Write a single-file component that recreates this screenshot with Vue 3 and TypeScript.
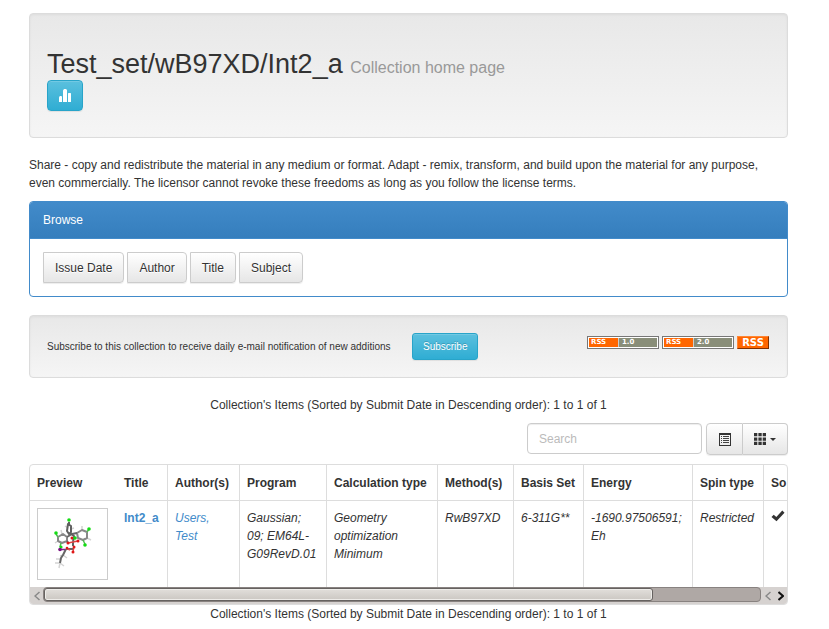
<script setup lang="ts">
import { ref } from 'vue'

interface Column {
  label: string
  width: number
}

const browseOptions: string[] = ['Issue Date', 'Author', 'Title', 'Subject']
const summary = "Collection's Items (Sorted by Submit Date in Descending order): 1 to 1 of 1"
const columns: Column[] = [
  { label: 'Preview', width: 87 },
  { label: 'Title', width: 50 },
  { label: 'Author(s)', width: 72 },
  { label: 'Program', width: 87 },
  { label: 'Calculation type', width: 111 },
  { label: 'Method(s)', width: 76 },
  { label: 'Basis Set', width: 70 },
  { label: 'Energy', width: 109 },
  { label: 'Spin type', width: 71 },
  { label: 'So', width: 144 },
]

const query = ref('')
const viewport = ref<HTMLElement | null>(null)

function scrollTable(delta: number): void {
  viewport.value?.scrollBy({ left: delta })
}
</script>

<template>
  <main class="page">
    <header class="well masthead">
      <h1>Test_set/wB97XD/Int2_a <small>Collection home page</small></h1>
      <button class="btn btn-info stats" type="button" aria-label="Statistics">
        <svg width="12" height="13" viewBox="0 0 12 13" fill="#fff" aria-hidden="true">
          <path d="M0 8.5.8 7h1.6l.6.8V13H0zM4 1.5 5 0h2l1 1v12H4zM9 4.5l.5-.5h2l.5.5V13H9z" />
        </svg>
      </button>
    </header>

    <p class="license">
      Share - copy and redistribute the material in any medium or format. Adapt - remix, transform,
      and build upon the material for any purpose, even commercially. The licensor cannot revoke
      these freedoms as long as you follow the license terms.
    </p>

    <section class="panel">
      <h2 class="panel-heading">Browse</h2>
      <div class="panel-body">
        <button v-for="option in browseOptions" :key="option" class="btn btn-default browse" type="button">
          {{ option }}
        </button>
      </div>
    </section>

    <form class="well subscribe" @submit.prevent>
      <span class="notice">Subscribe to this collection to receive daily e-mail notification of new additions</span>
      <button class="btn btn-info btn-small" type="submit">Subscribe</button>
      <div class="feeds">
        <a class="feed" href="#rss1"><span class="feed-kind">RSS</span><span class="feed-version">1.0</span></a>
        <a class="feed" href="#rss2"><span class="feed-kind">RSS</span><span class="feed-version">2.0</span></a>
        <a class="feed-solid" href="#rss">RSS</a>
      </div>
    </form>

    <p class="summary">{{ summary }}</p>

    <div class="toolbar">
      <input v-model="query" class="search" type="text" placeholder="Search" aria-label="Search" />
      <div class="group">
        <button class="btn btn-default" type="button" aria-label="Toggle view">
          <svg width="12" height="13" viewBox="0 0 12 13" aria-hidden="true">
            <path d="M0 0h12v13H0zM1 2v10h10V2z" fill="#333" fill-rule="evenodd" />
            <path d="M2 3.5h1M4 3.5h6M2 5.5h1M4 5.5h6M2 7.5h1M4 7.5h6M2 9.5h1M4 9.5h6" stroke="#444" />
          </svg>
        </button>
        <button class="btn btn-default" type="button" aria-label="Columns">
          <svg width="12" height="12" viewBox="0 0 12 12" fill="#333" aria-hidden="true">
            <path d="M0 0h3.3v3.3H0zM4.4 0h3.3v3.3H4.4zM8.7 0H12v3.3H8.7zM0 4.4h3.3v3.3H0zM4.4 4.4h3.3v3.3H4.4zM8.7 4.4H12v3.3H8.7zM0 8.7h3.3V12H0zM4.4 8.7h3.3V12H4.4zM8.7 8.7H12V12H8.7z" />
          </svg>
          <svg width="6" height="3" viewBox="0 0 6 3" fill="#333" aria-hidden="true"><path d="M0 0h6L3 3z" /></svg>
        </button>
      </div>
    </div>

    <div class="results">
      <div ref="viewport" class="viewport">
        <table>
          <colgroup>
            <col v-for="column in columns" :key="column.label" :style="{ width: column.width + 'px' }" />
          </colgroup>
          <thead>
            <tr>
              <th v-for="column in columns" :key="column.label" scope="col">{{ column.label }}</th>
            </tr>
          </thead>
          <tbody>
            <tr>
              <td>
                <a class="thumb" href="#item" aria-label="Int2_a">
                  <svg width="69" height="70" viewBox="0 0 69 70" fill="none" aria-hidden="true">
                    <g stroke="#d4d4d4" stroke-width="1.5">
                      <path d="m27 17 3 2M36 19l-3 1M44 21v-4M49 29l4 2M24 25l-1-4M17 34l3-2M25 46l-3 1M25 46l4 3M22 50l-4 0M22 54l-5 0M22 54l4 3M22 54l-1 5" />
                    </g>
                    <g stroke="#888" stroke-width="2" stroke-linejoin="round">
                      <path d="m20 28 5-3 4 3v4l-5 2-4-2zM39 24l5-3 5 2v6l-4 2-5-2z" />
                      <path d="m29 28 5-3 5-1M29 32l1 2M28 40l7 0M28 40l-3 6-2 3-1 5" stroke="#666" />
                      <path d="m30 15 3 2 0 6-2 2-2-3zM31 13v3M32 24l4 3-1 6M35 33v4" stroke="#606060" />
                    </g>
                    <path d="m23 34-1 4M49 23l2-3M45 31l2 4M20 28l-2-3" stroke="#55b955" stroke-width="1.5" />
                    <g stroke="#df4444" stroke-width="1.5">
                      <path d="m30 34 5-1 5-1M36 37l-1 6M28 39l4 2" />
                    </g>
                    <g fill="#df1717">
                      <circle cx="30" cy="34" r="1.5" /><circle cx="40" cy="32" r="1.5" />
                      <circle cx="36" cy="38" r="1.5" /><circle cx="35" cy="43" r="1.5" />
                      <circle cx="34" cy="29" r="1.5" /><circle cx="29" cy="39" r="1.3" />
                    </g>
                    <g fill="#14dc14">
                      <circle cx="31" cy="11" r="1.8" /><circle cx="18" cy="24" r="1.8" />
                      <circle cx="51" cy="20" r="1.8" /><circle cx="47" cy="36" r="1.8" />
                      <circle cx="37" cy="29" r="1.8" /><circle cx="23" cy="38" r="1.6" />
                    </g>
                    <path d="M22 40.500h5" stroke="#84218c" stroke-width="1.500" />
                    <circle cx="22" cy="40.500" r="1.800" fill="#781080" />
                  </svg>
                </a>
              </td>
              <td><a class="title" href="#item">Int2_a</a></td>
              <td><a href="#author">Users, Test</a></td>
              <td>Gaussian; 09; EM64L-G09RevD.01</td>
              <td>Geometry optimization Minimum</td>
              <td>RwB97XD</td>
              <td>6-311G**</td>
              <td>-1690.97506591; Eh</td>
              <td>Restricted</td>
              <td>
                <svg width="14" height="12" viewBox="0 0 14 12" aria-label="Yes" role="img">
                  <path d="m.5 7 2.200-2.200L5.300 7l6-6.500 2.200 2.200L5.500 11.300z" fill="#333" />
                </svg>
              </td>
            </tr>
          </tbody>
        </table>
      </div>
      <div class="scrollbar">
        <button type="button" aria-label="Scroll left" @click="scrollTable(-40)">
          <svg width="6" height="10" viewBox="0 0 6 10" fill="none" stroke="#888" stroke-width="1.5"><path d="M5.5 1 1 5l4.5 4" /></svg>
        </button>
        <div class="track"><div class="thumb-bar"></div></div>
        <button type="button" aria-label="Scroll back" @click="scrollTable(-40)">
          <svg width="6" height="10" viewBox="0 0 6 10" fill="none" stroke="#888" stroke-width="1.5"><path d="M5.5 1 1 5l4.5 4" /></svg>
        </button>
        <button type="button" aria-label="Scroll right" @click="scrollTable(40)">
          <svg width="6" height="10" viewBox="0 0 6 10" fill="none" stroke="#111" stroke-width="2"><path d="M.5 1 5 5 .5 9" /></svg>
        </button>
      </div>
    </div>

    <p class="summary">{{ summary }}</p>
  </main>
</template>

<style>
body {
  background: #fff;
}
</style>

<style scoped>
* {
  box-sizing: border-box;
}
.page {
  padding: 13px 41px 0 29px;
  font-family: 'Liberation Sans', Arial, sans-serif;
  font-size: 12px;
  line-height: 18px;
  color: #333;
}
p,
h1,
h2 {
  margin: 0;
}
a {
  color: #428bca;
  text-decoration: none;
}
.well {
  border: 1px solid #dcdcdc;
  border-radius: 4px;
  background: linear-gradient(#e8e8e8, #f5f5f5);
  box-shadow: inset 0 1px 3px rgba(0, 0, 0, 0.05), 0 1px 0 rgba(255, 255, 255, 0.1);
}
.masthead {
  padding: 34px 17px 26px;
}
h1 {
  font-size: 27px;
  font-weight: 400;
  line-height: 32px;
}
h1 small {
  font-size: 16px;
  line-height: 1;
  color: #999;
}
.btn {
  display: inline-flex;
  align-items: center;
  justify-content: center;
  height: 31px;
  padding: 0 11px;
  border: 1px solid #ccc;
  border-radius: 4px;
  font: inherit;
  cursor: pointer;
}
.btn-default {
  color: #333;
  background: linear-gradient(#fff, #e6e6e6);
  box-shadow: inset 0 1px 0 rgba(255, 255, 255, 0.15), 0 1px 1px rgba(0, 0, 0, 0.075);
  text-shadow: 0 1px 0 #fff;
}
.btn-info {
  color: #fff;
  border-color: #28a4c9;
  background: linear-gradient(#5bc0de, #2fadd3);
  box-shadow: inset 0 1px 0 rgba(255, 255, 255, 0.15), 0 1px 1px rgba(0, 0, 0, 0.075);
  text-shadow: 0 -1px 0 rgba(0, 0, 0, 0.2);
}
.stats {
  display: flex;
}
.license {
  padding: 18px 9px 9px 0;
}
.panel {
  border: 1px solid #428bca;
  border-radius: 4px;
  overflow: hidden;
}
.panel-heading {
  padding: 9px 13px;
  border-bottom: 1px solid #428bca;
  font-size: 12px;
  font-weight: 400;
  color: #fff;
  background: linear-gradient(#428bca, #357ebd);
}
.panel-body {
  display: flex;
  gap: 3px;
  padding: 13px;
}
.browse {
  border-radius: 0 4px 4px 0;
}
.subscribe {
  display: flex;
  align-items: center;
  gap: 3px;
  margin-top: 18px;
  padding: 17px;
  font-size: 10px;
}
.notice {
  min-width: 362px;
}
.btn-small {
  height: 27px;
  padding: 0 10px;
  border-radius: 3px;
}
.feeds {
  display: flex;
  gap: 3px;
  height: 13px;
  margin: 0 1px 8px auto;
}
.feed {
  display: flex;
  width: 72px;
  border: 1px solid #777;
  padding: 1px;
  background: #fff;
  color: #fff;
  font: bold 7px/9px 'DejaVu Sans', sans-serif;
}
.feed-kind {
  width: 30px;
  padding-left: 2px;
  border-right: 1px solid #ccc;
  background: #f60;
}
.feed-version {
  flex: 1;
  padding-left: 3px;
  background: #898e79;
}
.feed-solid {
  width: 32px;
  border: 1px solid;
  border-color: #ff8533 #802f00 #802f00 #ff8533;
  background: #f60;
  color: #fff;
  font: bold 10px/11px 'DejaVu Sans', sans-serif;
  text-align: center;
}
.summary {
  text-align: center;
}
.subscribe + .summary {
  margin-top: 18px;
}
.toolbar {
  display: flex;
  justify-content: flex-end;
  gap: 4px;
  margin: 9px 0;
}
.search {
  width: 175px;
  height: 31px;
  padding: 0 11px;
  border: 1px solid #ccc;
  border-radius: 4px;
  font: inherit;
  color: #555;
  box-shadow: inset 0 1px 1px rgba(0, 0, 0, 0.075);
}
.search::placeholder {
  color: #bbb;
}
.group {
  display: flex;
}
.group .btn {
  gap: 4px;
  height: 32px;
}
.group .btn:first-child {
  width: 37px;
  border-radius: 4px 0 0 4px;
}
.group .btn:last-child {
  width: 45px;
  border-left: 0;
  border-radius: 0 4px 4px 0;
}
.results {
  border: 1px solid #ddd;
  border-radius: 4px;
  overflow: hidden;
}
.viewport {
  overflow: hidden;
}
table {
  width: 877px;
  table-layout: fixed;
  border-spacing: 0;
}
th,
td {
  padding: 8px 7px 7px;
  border-left: 1px solid #ddd;
  text-align: left;
  vertical-align: top;
}
td:first-child {
  padding-top: 7px;
}
th:nth-child(-n + 2),
td:nth-child(-n + 2) {
  border-left: 0;
}
th {
  padding: 9px 7px 8px;
  border-bottom: 1px solid #ddd;
  white-space: nowrap;
}
td {
  font-style: italic;
}
.title {
  font-style: normal;
  font-weight: 700;
}
.thumb {
  display: block;
  width: 71px;
  height: 72px;
  border: 1px solid #ccc;
}
.thumb svg {
  display: block;
}
.scrollbar {
  display: flex;
  height: 17px;
  background: #d6d2d0;
}
.scrollbar button {
  display: flex;
  align-items: center;
  justify-content: center;
  width: 13px;
  padding: 0;
  border: 0;
  background: none;
}
.track {
  flex: 1;
  height: 15px;
  border: 1px solid #888280;
  border-radius: 4px;
  background: #afa8a5;
}
.thumb-bar {
  width: 85%;
  height: 13px;
  border: 1px solid #666260;
  border-radius: 3px;
  background: linear-gradient(#e2dfdb, #cbc7c2);
  box-shadow: inset 0 0 0 1px #eeece9;
}
</style>
